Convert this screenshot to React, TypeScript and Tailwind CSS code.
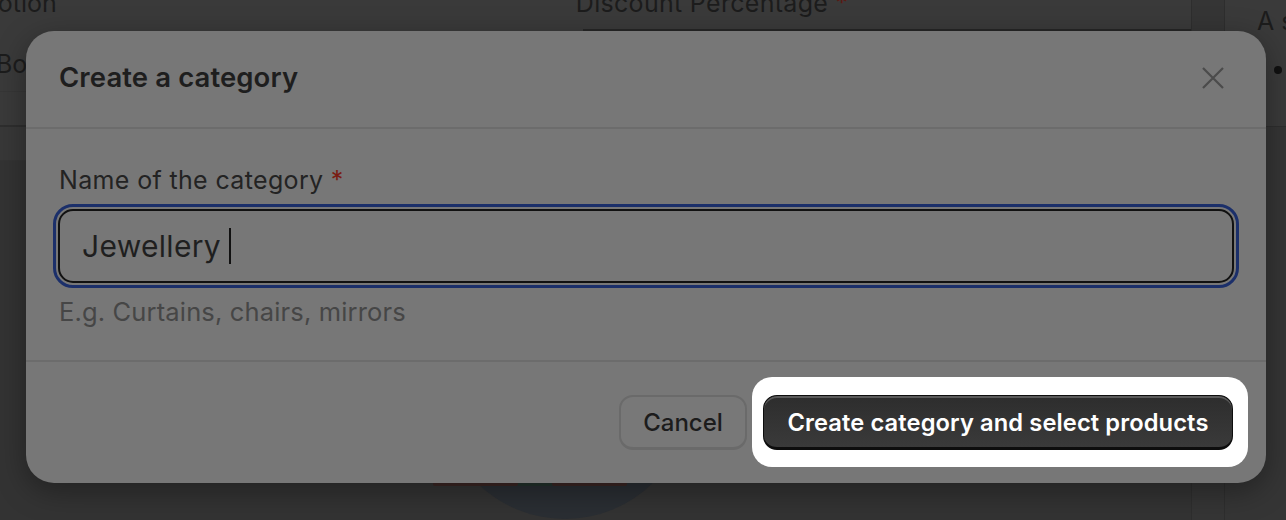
import React from "react";

function CloseIcon() {
  return (
    <svg width="24" height="24" viewBox="0 0 24 24" fill="none" stroke="#4b4b4b" strokeWidth="2.2" strokeLinecap="butt">
      <path d="M2 2 L22 22 M22 2 L2 22" />
    </svg>
  );
}

export default function App() {
  return (
    <div
      className="relative w-[1286px] h-[520px] overflow-hidden bg-[#333333]"
      style={{ fontFamily: "Inter, 'Noto Sans', sans-serif" }}
    >
      {/* background page */}
      <div className="flex h-full w-full">
        <div className="flex flex-col w-[1191px]">
          <div className="h-[31px] bg-[#3a3a3a] relative overflow-hidden">
            <div className="flex items-start whitespace-nowrap -mt-[12px]">
              <span className="text-[25px] leading-[30px] text-[#1c1c1c] -ml-[64px]">Promotion</span>
              <span className="ml-[519px] text-[25px] leading-[30px] text-[#1c1c1c] tracking-[0.3px]">
                Discount Percentage <span className="text-[#5a1a14]">*</span>
              </span>
            </div>
            <div className="absolute left-[583px] right-0 bottom-0 h-[2px] bg-[#262626]" />
          </div>
          <div className="h-[96px] bg-[#3a3a3a] border-b-2 border-[#2e2e2e] flex flex-col">
            <div className="h-[61px] border-b border-[#363636] flex items-end overflow-hidden">
              <span className="text-[25px] leading-[30px] text-[#1c1c1c] -ml-[4px] mb-[12px] whitespace-nowrap">Bonus</span>
            </div>
          </div>
          <div className="h-[34px] bg-[#383838] border-b border-[#343434]" />
          <div className="flex-1 bg-[#333333] flex flex-col items-start">
            <div className="ml-[440px] mt-[108px] w-[250px] h-[250px] rounded-full bg-[#2a2e33]" />
          </div>
        </div>
        <div className="w-[34px] border-l border-r border-[#2e2e2e] bg-[#353535]" />
        <div className="flex-1 flex flex-col bg-[#353535] overflow-hidden">
          <div className="h-[127px] bg-[#3a3a3a] border-b border-[#2e2e2e] pl-[32px] pt-[6px]">
            <div className="text-[25px] leading-[30px] text-[#1c1c1c] whitespace-nowrap">A s</div>
            <div className="mt-[30px] ml-[17px] w-[8px] h-[8px] rounded-full bg-[#111]" />
          </div>
        </div>
      </div>

      {/* legend strip peeking below modal */}
      <div className="absolute left-[433px] top-[481px] flex h-[5px]">
        <div className="w-[85px] bg-[#3b2624] rounded-b-[2px]" />
        <div className="w-[34px] bg-[#24332d]" />
        <div className="w-[75px] bg-[#3b2624] rounded-b-[2px]" />
      </div>

      {/* modal */}
      <div className="absolute left-[26px] top-[31px] w-[1240px] h-[452px] rounded-[28px] bg-[#777777] shadow-[0_8px_30px_rgba(0,0,0,0.35)] flex flex-col">
        <div className="h-[98px] border-b-2 border-[#6c6c6c] flex items-center justify-between pl-[33px] pr-[33px]">
          <h2 className="text-[27.5px] font-semibold text-[#1e1e1e] tracking-[0.1px] mt-[-2px]">Create a category</h2>
          <button className="w-[40px] h-[40px] flex items-center justify-center -mt-[2px]">
            <CloseIcon />
          </button>
        </div>
        <div className="h-[233px] border-b-2 border-[#6c6c6c] px-[27px] pt-[36px]">
          <label className="block pl-[6px] text-[25px] leading-[30px] text-[#232323] tracking-[0.35px]">
            Name of the category <span className="text-[#7a1c12]">*</span>
          </label>
          <div className="mt-[9px] rounded-[20px] border-[3px] border-[#1b2f6a] p-[2px]">
            <div className="h-[74px] rounded-[15px] border-2 border-[#111111] flex items-center pl-[22px]">
              <span className="text-[30px] text-[#1f1f1f] tracking-[0.3px]">Jewellery</span>
              <span className="ml-[8px] w-[2px] h-[36px] bg-[#111]" />
            </div>
          </div>
          <div className="mt-[9px] pl-[6px] text-[25.5px] leading-[30px] text-[#464646] tracking-[0.15px]">
            E.g. Curtains, chairs, mirrors
          </div>
        </div>
        <div className="flex-1 flex items-center justify-end pr-[33px] gap-[16px]">
          <button className="w-[128px] h-[55px] rounded-[14px] border-2 border-[#6a6a6a] border-b-[3px] bg-[#787878] text-[24px] font-medium text-[#1c1c1c] pt-[2px]">
            Cancel
          </button>
          <div className="relative">
            <div className="absolute -left-[11px] -right-[15px] -top-[18px] -bottom-[17px] rounded-[20px] bg-white" />
            <button className="relative w-[470px] h-[55px] rounded-[14px] border border-[#0d0d0d] border-b-[3px] bg-[linear-gradient(#2d2d2d,#3a3a3a)] shadow-[inset_0_2px_0_#5a5a5a] text-[23.7px] font-semibold text-white tracking-[0.1px] pt-[2px]">
              Create category and select products
            </button>
          </div>
        </div>
      </div>
    </div>
  );
}
